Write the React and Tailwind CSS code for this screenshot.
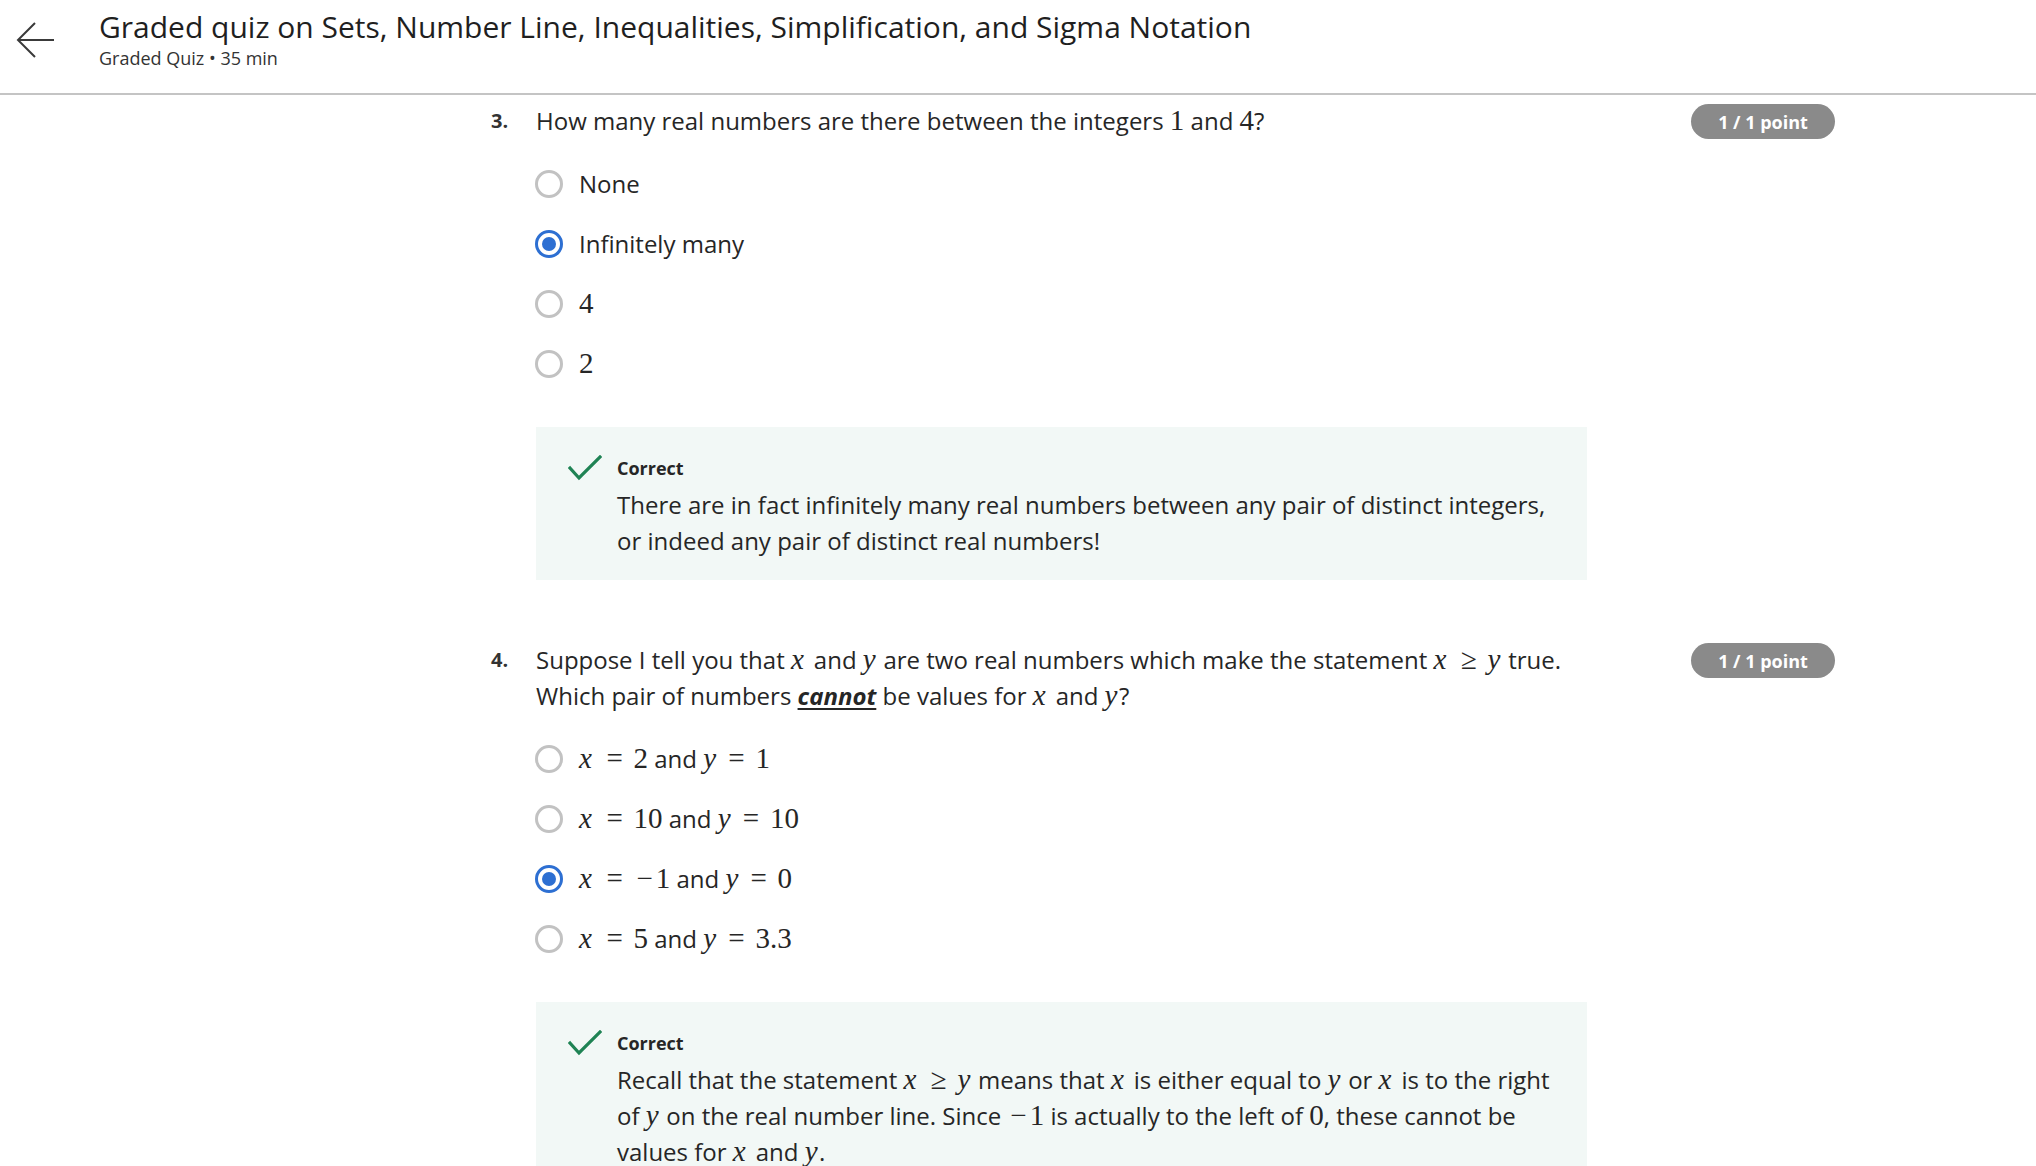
import React from "react";

// inline math: letters italic, digits / operators upright, spaced roughly like KaTeX
const Eq = ({ t }) => (
  <span className="font-['Liberation_Serif','Times_New_Roman',serif] text-[1.21em] leading-none whitespace-nowrap">
    {t.split("").map((c, i) => {
      if (c === " ") return null;
      if (c === "x") return <i key={i} className="pr-[0.13em]">x</i>;
      if (/[a-z]/.test(c)) return <i key={i} className="pr-[0.05em]">{c}</i>;
      if (c === "=" || c === "≥") return <span key={i} className="mx-[0.37em]">{c}</span>;
      if (c === "−") return <span key={i} className="px-[0.1em]">{c}</span>;
      return <React.Fragment key={i}>{c}</React.Fragment>;
    })}
  </span>
);

const Radio = ({ checked }) =>
  checked ? (
    <span className="w-[28px] h-[28px] shrink-0 rounded-full border-[3px] border-[#2d6fd2] flex items-center justify-center">
      <span className="w-[14px] h-[14px] rounded-full bg-[#2d6fd2]" />
    </span>
  ) : (
    <span className="w-[28px] h-[28px] shrink-0 rounded-full border-[3px] border-[#c2c2c2]" />
  );

const Check = () => (
  <svg width="34" height="26" viewBox="0 0 34 26" fill="none">
    <polyline
      points="2,13 11,23 32,2"
      stroke="#1f8354"
      strokeWidth="3.2"
      strokeLinecap="square"
      strokeLinejoin="miter"
    />
  </svg>
);

const Option = ({ checked, children }) => (
  <div className="flex items-center h-[60px] gap-[16px] -ml-[1px]">
    <Radio checked={checked} />
    <span>{children}</span>
  </div>
);

const Feedback = ({ children }) => (
  <div className="bg-[#f2f8f6] pt-[29px] pb-[21px] pl-[32px] pr-[30px] flex">
    <div className="w-[49px] shrink-0 h-[24px] flex items-center">
      <Check />
    </div>
    <div>
      <div className="h-[24px] flex items-center text-[18px] font-bold text-[#262626]">Correct</div>
      <p className="mt-[7px]">{children}</p>
    </div>
  </div>
);

const Question = ({ num, title, children }) => (
  <div className="flex">
    <div className="w-[45px] shrink-0 text-[20px] font-bold text-[#333]">{num}.</div>
    <div className="w-[1051px] shrink-0">
      <p>{title}</p>
      <div className="mt-[15px] mb-[33px]">{children[0]}</div>
      {children[1]}
    </div>
    <div className="ml-[104px] mt-[1px]">
      <span className="flex items-center justify-center h-[35px] w-[144px] rounded-full bg-[#8a8a8a] text-white text-[18px] font-bold leading-none">
        1 / 1 point
      </span>
    </div>
  </div>
);

export default function App() {
  return (
    <div className="h-[1166px] overflow-hidden bg-white font-['Open_Sans',sans-serif] text-[#262626]">
      <header className="h-[95px] border-b-2 border-[#c4c4c4] flex">
        <div className="w-[99px] shrink-0 pl-[15px] pt-[20px]">
          <svg width="40" height="40" viewBox="0 0 40 40" fill="none">
            <path d="M3 20h36M20 3 3 20l17 17" stroke="#3a3a3a" strokeWidth="2" />
          </svg>
        </div>
        <div className="pt-[8px]">
          <h1 className="text-[30px] leading-[37px] text-[#1f1f1f]">
            Graded quiz on Sets, Number Line, Inequalities, Simplification, and Sigma Notation
          </h1>
          <p className="mt-[1px] text-[18px] leading-[24px] text-[#333]">Graded Quiz • 35 min</p>
        </div>
      </header>

      <main className="pl-[491px] pt-[8px] text-[24px] leading-[36px]">
        <Question
          num={3}
          title={
            <>
              How many real numbers are there between the integers <Eq t="1" /> and <Eq t="4" />?
            </>
          }
        >
          <>
            <Option>None</Option>
            <Option checked>Infinitely many</Option>
            <Option>
              <Eq t="4" />
            </Option>
            <Option>
              <Eq t="2" />
            </Option>
          </>
          <Feedback>
            There are in fact infinitely many real numbers between any pair of distinct integers,
            <br />
            or indeed any pair of distinct real numbers!
          </Feedback>
        </Question>

        <div className="h-[62px]" />

        <Question
          num={4}
          title={
            <>
              Suppose I tell you that <Eq t="x" /> and <Eq t="y" /> are two real numbers which make the statement{" "}
              <Eq t="x ≥ y" /> true.
              <br />
              Which pair of numbers{" "}
              <span className="font-bold italic underline decoration-2 underline-offset-[3px]">cannot</span> be
              values for <Eq t="x" /> and <Eq t="y" />?
            </>
          }
        >
          <>
            <Option>
              <Eq t="x = 2" /> and <Eq t="y = 1" />
            </Option>
            <Option>
              <Eq t="x = 10" /> and <Eq t="y = 10" />
            </Option>
            <Option checked>
              <Eq t="x = −1" /> and <Eq t="y = 0" />
            </Option>
            <Option>
              <Eq t="x = 5" /> and <Eq t="y = 3.3" />
            </Option>
          </>
          <Feedback>
            Recall that the statement <Eq t="x ≥ y" /> means that <Eq t="x" /> is either equal to <Eq t="y" /> or{" "}
            <Eq t="x" /> is to the right
            <br />
            of <Eq t="y" /> on the real number line. Since <Eq t="−1" /> is actually to the left of <Eq t="0" />,
            these cannot be
            <br />
            values for <Eq t="x" /> and <Eq t="y" />.
          </Feedback>
        </Question>
      </main>
    </div>
  );
}
